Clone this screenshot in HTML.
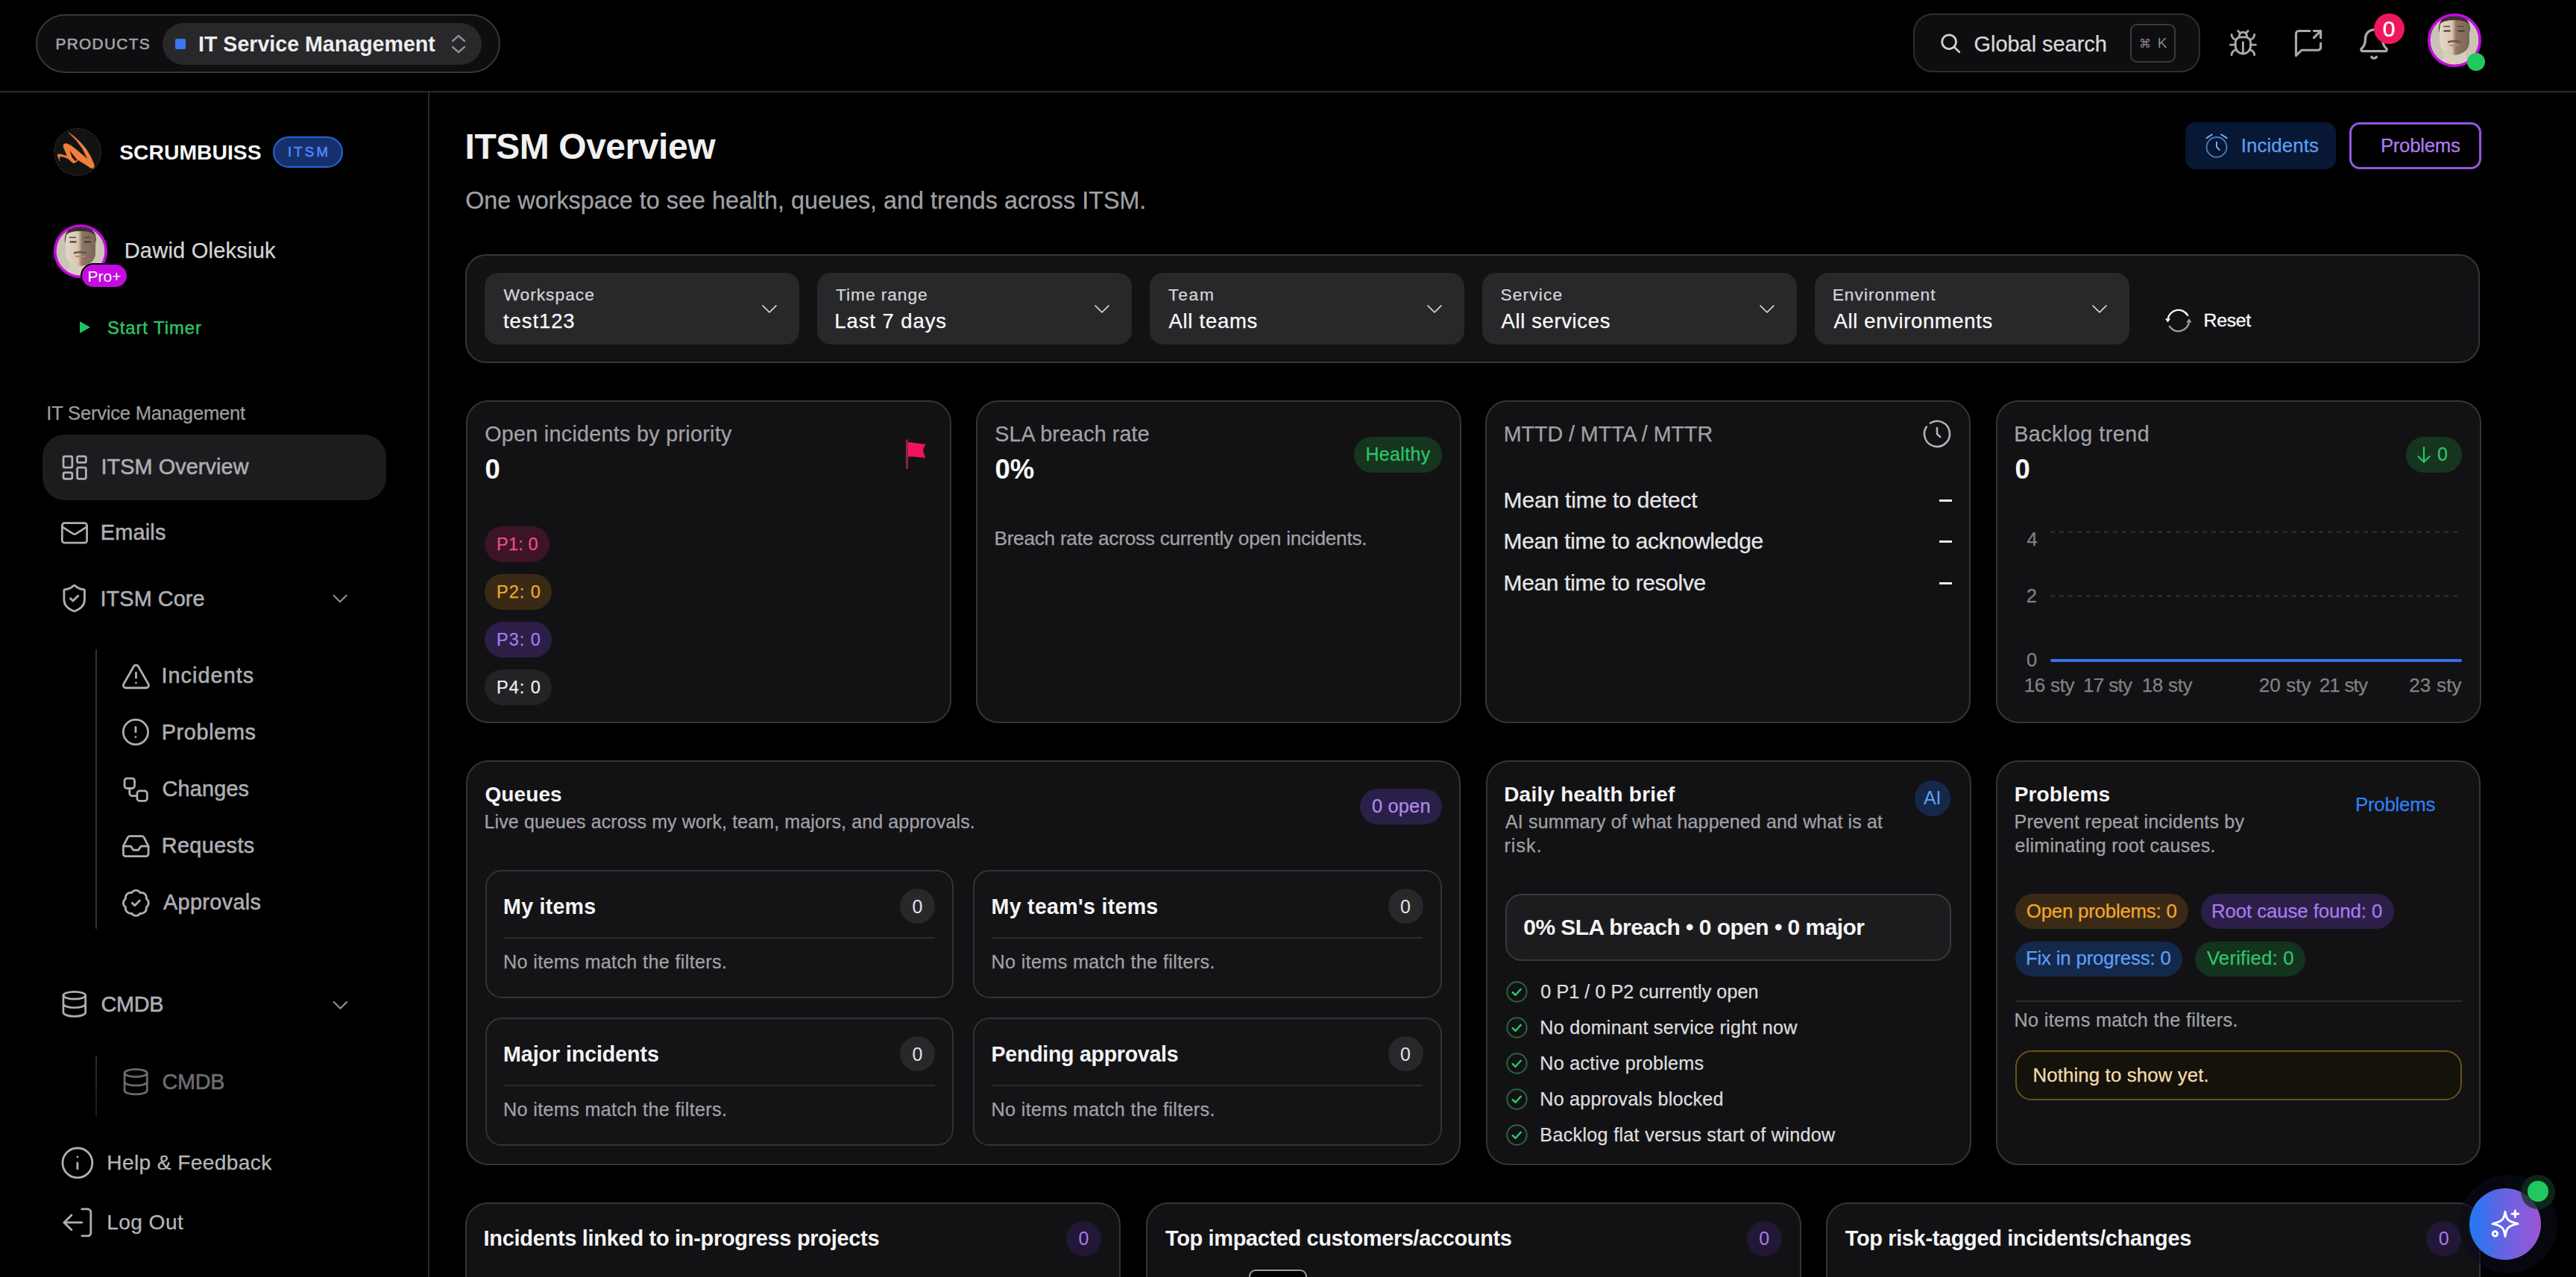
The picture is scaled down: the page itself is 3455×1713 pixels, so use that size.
<!DOCTYPE html>
<html><head><meta charset="utf-8"><title>ITSM Overview</title>
<style>
*{box-sizing:border-box;margin:0;padding:0}
html,body{width:3455px;height:1713px;overflow:hidden;background:#000;font-family:"Liberation Sans",sans-serif;color:#e4e4e7}
.a{position:absolute}
.t{line-height:1;white-space:nowrap;-webkit-text-stroke:0.25px currentColor}
.fx{display:flex;align-items:center}
svg{display:block}
.hline{left:0;top:122px;width:3455px;height:2px;background:#2a2a2a}
.vline{left:574px;top:124px;width:2px;height:1589px;background:#2a2a2a}
/* header */
.prod{left:48px;top:19px;width:623px;height:79px;border:2px solid #38383a;border-radius:40px;background:#0e0e10}
.prod .lbl{position:absolute;left:24.5px;top:25.8px;font-size:20.8px;font-weight:normal;-webkit-text-stroke:0.65px #a1a1a6;letter-spacing:1.35px;color:#a1a1a6}
.prod .pill{position:absolute;left:168px;top:10px;width:428px;height:56px;border-radius:28px;background:#28282b}
.prod .sq{position:absolute;left:17px;top:21px;width:14px;height:14px;background:#3b76f0;border-radius:2px}
.prod .nm{position:absolute;left:48px;top:12px;font-size:28.6px;font-weight:bold;color:#ededee;white-space:nowrap}
.search{left:2566px;top:18px;width:385px;height:79px;border:2px solid #2e2e30;border-radius:26px;background:#0e0e10}
.search .txt{position:absolute;left:81px;top:22px;font-size:28px;color:#d8d8da}
.kbd{position:absolute;left:289px;top:12px;width:61px;height:52px;border:2px solid #3a3a3c;border-radius:9px;font-size:19px;color:#8a8a8e}
/* sidebar */
.nav{left:57px;width:461px;height:88px;border-radius:30px}
.nav.act{background:#1c1c1e}
.navt{font-size:28px;font-weight:bold;color:#c9c9cc;white-space:nowrap}
.subt{font-size:28px;font-weight:bold;color:#c9c9cc;white-space:nowrap}
.ico{stroke:#bdbdc0;fill:none;stroke-width:1.7;stroke-linecap:round;stroke-linejoin:round}
</style></head><body>
<div class="a hline"></div>
<div class="a vline"></div>

<!-- PRODUCTS pill -->
<div class="a prod">
  <div class="lbl">PRODUCTS</div>
  <div class="pill">
    <div class="sq"></div>
    <div class="nm">IT Service Management</div>
    <svg class="a" style="left:386px;top:14px" width="22" height="28" viewBox="0 0 22 28"><path d="M3 10 L11 3 L19 10 M3 18 L11 25 L19 18" stroke="#8e8e92" stroke-width="2.4" fill="none" stroke-linecap="round" stroke-linejoin="round"/></svg>
  </div>
</div>

<!-- search -->
<div class="a search">
  <svg class="a" style="left:32.5px;top:22.5px" width="30" height="30" viewBox="0 0 24 24"><circle cx="10.5" cy="10.5" r="7.5" stroke="#d0d0d3" stroke-width="2.2" fill="none"/><path d="M16 16 L21.5 21.5" stroke="#d0d0d3" stroke-width="2.2" stroke-linecap="round"/></svg>
  <div class="kbd fx" style="justify-content:center;gap:9px"><span style="font-size:16px">&#8984;</span><span>K</span></div>
</div>

<div class="a t" style="left:2647.6px;top:45.4px;font-size:29.00px;color:#d8d8da;letter-spacing:-0.06px;">Global search</div>
<!-- header icons -->
<svg class="a" style="left:2987.5px;top:37.5px;" width="40.8" height="40.8" viewBox="0 0 24 24"><g stroke="#a9a9ac" stroke-width="1.7" fill="none" stroke-linecap="round" stroke-linejoin="round"><path d="m8 2 1.88 1.88"/><path d="M14.12 3.88 16 2"/><path d="M9 7.13v-1a3.003 3.003 0 1 1 6 0v1"/><path d="M12 20c-3.3 0-6-2.7-6-6v-3a4 4 0 0 1 4-4h4a4 4 0 0 1 4 4v3c0 3.3-2.7 6-6 6"/><path d="M12 20v-9"/><path d="M6.53 9C4.6 8.8 3 7.1 3 5"/><path d="M6 13H2"/><path d="M3 21c0-2.1 1.7-3.9 3.8-4"/><path d="M20.97 5c0 2.1-1.6 3.8-3.5 4"/><path d="M22 13h-4"/><path d="M17.2 17c2.1.1 3.8 1.9 3.8 4"/></g></svg>
<svg class="a" style="left:3074.2px;top:36.4px;" width="44.1" height="44.1" viewBox="0 0 24 24"><g stroke="#a9a9ac" stroke-width="1.7" fill="none" stroke-linecap="round" stroke-linejoin="round"><path d="M21 12v3a2 2 0 0 1-2 2H7l-4 4V5a2 2 0 0 1 2-2h8"/><path d="M16 3h5v5"/><path d="m16 8 5-5"/></g></svg>
<svg class="a" style="left:3161.1px;top:35.7px;" width="46.1" height="46.1" viewBox="0 0 24 24"><g stroke="#a9a9ac" stroke-width="1.7" fill="none" stroke-linecap="round" stroke-linejoin="round"><path d="M10.268 21a2 2 0 0 0 3.464 0"/><path d="M3.262 15.326A1 1 0 0 0 4 17h16a1 1 0 0 0 .74-1.673C19.41 13.956 18 12.499 18 8A6 6 0 0 0 6 8c0 4.499-1.411 5.956-2.738 7.326"/></g></svg>
<div class="a fx" style="left:3183.5px;top:17.5px;width:41px;height:41px;border-radius:50%;background:#f0185a;justify-content:center;font-size:30px;color:#fff;-webkit-text-stroke:0.4px #fff;padding-top:1px">0</div>
<!-- avatar top -->
<svg class="a" style="left:3256px;top:18px" width="72" height="72" viewBox="0 0 72 72"><defs><clipPath id="ca2"><circle cx="36" cy="36" r="33"/></clipPath><linearGradient id="ga2" x1="0" x2="1"><stop offset="0" stop-color="#e4d6c6"/><stop offset="0.42" stop-color="#d9c6b2"/><stop offset="0.55" stop-color="#8f7663"/><stop offset="1" stop-color="#7a6656"/></linearGradient></defs><g clip-path="url(#ca2)"><rect width="72" height="72" fill="#c9c4b6"/><path d="M22 50 L50 50 L54 72 L18 72 Z" fill="#d8cdbd"/><path d="M16 14 Q16 6 35 6 Q56 6 56 16 L56 40 Q54 54 36 56 Q18 54 16 40 Z" fill="url(#ga2)"/><path d="M15 26 Q13 2 36 2 Q58 2 57 26 L55 14 Q50 9 36 9 Q21 9 17 14 Z" fill="#3b302a"/><path d="M21 17.5 h9 M40 17.5 h9" stroke="#5a4637" stroke-width="1.6"/><path d="M21.5 23.5 h9 M40.5 23.5 h9" stroke="#3e3028" stroke-width="2.2"/><path d="M27 38.5 Q35.5 36 44 38.5" stroke="#6e5443" stroke-width="2.4" fill="none"/><path d="M29 42.5 Q35.5 44 42 42.5" stroke="#b98878" stroke-width="1.8" fill="none"/></g><circle cx="36" cy="36" r="34.2" fill="none" stroke="#c40ae0" stroke-width="3.6"/></svg>
<div class="a" style="left:3309px;top:71px;width:24px;height:24px;border-radius:50%;background:#1fc95f"></div>


<!-- SIDEBAR -->
<div class="a" style="left:72px;top:172px;width:64px;height:64px;border-radius:50%;background:#121212;border:1px dashed #3a3a3a"></div>
<svg class="a" style="left:72px;top:172px" width="64" height="64" viewBox="0 0 64 64"><path fill-rule="evenodd" fill="#ee7f3d" stroke="#ee7f3d" stroke-width="0.6" stroke-linejoin="round" d="M20.0 5.8 L27.3 10.9 L35.2 18.2 L43.1 27.3 L49.3 37.5 L53.3 46.5 L54.7 51.3 L53.0 53.8 L49.9 53.6 L42.0 48.2 L33.0 42.8 L29.6 45.7 L27.3 46.8 L25.1 45.9 L19.4 40.9 L14.4 38.7 L8.7 37.6 L7.3 40.9 L8.1 43.7 L5.2 36.5 L5.8 34.7 L10.4 35.2 L18.3 37.4 L15.2 30.2 L12.8 24.2 L13.7 21.3 L17.1 20.5 L22.8 22.9 L30.7 29.1 L45.9 41.7 L38.6 27.3 L30.7 16.6 Z M21.0 29.0 L31.8 42.4 L29.1 44.4 L24.2 38.9 Z"/></svg>
<div class="a t" style="left:160.2px;top:190.3px;font-size:28.30px;color:#fafafa;font-weight:bold;-webkit-text-stroke:0;letter-spacing:0.02px;">SCRUMBUISS</div>
<div class="a fx" style="left:366px;top:183px;width:94px;height:42px;border-radius:21px;background:#16306e;border:2px solid #2f62d8;justify-content:center;font-size:18.5px;font-weight:normal;-webkit-text-stroke:0.6px #4f86f7;letter-spacing:3.2px;color:#4f86f7;padding-left:3px">ITSM</div>

<svg class="a" style="left:72px;top:301px" width="72" height="72" viewBox="0 0 72 72"><defs><clipPath id="ca1"><circle cx="36" cy="36" r="33"/></clipPath><linearGradient id="ga1" x1="0" x2="1"><stop offset="0" stop-color="#e4d6c6"/><stop offset="0.42" stop-color="#d9c6b2"/><stop offset="0.55" stop-color="#8f7663"/><stop offset="1" stop-color="#7a6656"/></linearGradient></defs><g clip-path="url(#ca1)"><rect width="72" height="72" fill="#c9c4b6"/><path d="M22 50 L50 50 L54 72 L18 72 Z" fill="#d8cdbd"/><path d="M16 14 Q16 6 35 6 Q56 6 56 16 L56 40 Q54 54 36 56 Q18 54 16 40 Z" fill="url(#ga1)"/><path d="M15 26 Q13 2 36 2 Q58 2 57 26 L55 14 Q50 9 36 9 Q21 9 17 14 Z" fill="#3b302a"/><path d="M21 17.5 h9 M40 17.5 h9" stroke="#5a4637" stroke-width="1.6"/><path d="M21.5 23.5 h9 M40.5 23.5 h9" stroke="#3e3028" stroke-width="2.2"/><path d="M27 38.5 Q35.5 36 44 38.5" stroke="#6e5443" stroke-width="2.4" fill="none"/><path d="M29 42.5 Q35.5 44 42 42.5" stroke="#b98878" stroke-width="1.8" fill="none"/></g><circle cx="36" cy="36" r="34.2" fill="none" stroke="#c40ae0" stroke-width="3.6"/></svg>
<div class="a fx" style="left:108px;top:353px;width:64px;height:34px;border-radius:17px;background:#c40ae0;border:2px solid #000;justify-content:center;font-size:21px;color:#fff;padding-top:1px">Pro+</div>
<div class="a t" style="left:166.7px;top:322.2px;font-size:29.00px;color:#d6d6d8;letter-spacing:0.23px;">Dawid Oleksiuk</div>
<svg class="a" style="left:106px;top:430px" width="16" height="18" viewBox="0 0 16 18"><path d="M1 1 L15 9 L1 17 Z" fill="#22c35e"/></svg>
<div class="a t" style="left:143.9px;top:427.5px;font-size:23.80px;color:#2fc466;letter-spacing:0.96px;-webkit-text-stroke:0.5px #2fc466;">Start Timer</div>


<div class="a t" style="left:62.3px;top:541.7px;font-size:25.60px;color:#9d9da2;letter-spacing:-0.22px;">IT Service Management</div>
<div class="a" style="left:57px;top:583px;width:461px;height:88px;border-radius:30px;background:#1c1c1f"></div>
<svg class="a" style="left:79.9px;top:606.6px;" width="40.4" height="40.4" viewBox="0 0 24 24"><g stroke="#aeaeb3" stroke-width="1.65" fill="none" stroke-linecap="round" stroke-linejoin="round"><rect x="3" y="3" width="7" height="9" rx="1.2"/><rect x="14" y="3" width="7" height="5" rx="1.2"/><rect x="14" y="12" width="7" height="9" rx="1.2"/><rect x="3" y="16" width="7" height="5" rx="1.2"/></g></svg>
<div class="a t" style="left:135.4px;top:612.1px;font-size:28.80px;color:#aeaeb3;letter-spacing:0.11px;-webkit-text-stroke:0.55px #aeaeb3;">ITSM Overview</div>
<svg class="a" style="left:79.8px;top:695.0px;" width="39.9" height="39.9" viewBox="0 0 24 24"><g stroke="#aeaeb3" stroke-width="1.65" fill="none" stroke-linecap="round" stroke-linejoin="round"><rect x="2" y="4" width="20" height="16" rx="2"/><path d="m22 7-8.97 5.7a1.94 1.94 0 0 1-2.06 0L2 7"/></g></svg>
<div class="a t" style="left:134.8px;top:700.4px;font-size:28.80px;color:#aeaeb3;letter-spacing:0.22px;-webkit-text-stroke:0.55px #aeaeb3;">Emails</div>
<svg class="a" style="left:79.4px;top:781.8px;" width="41.3" height="41.3" viewBox="0 0 24 24"><g stroke="#aeaeb3" stroke-width="1.65" fill="none" stroke-linecap="round" stroke-linejoin="round"><path d="M20 13c0 5-3.5 7.5-7.66 8.95a1 1 0 0 1-.67-.01C7.5 20.5 4 18 4 13V6a1 1 0 0 1 1-1c2 0 4.5-1.2 6.24-2.72a1.17 1.17 0 0 1 1.52 0C14.51 3.81 17 5 19 5a1 1 0 0 1 1 1z"/><path d="m9 12 2 2 4-4"/></g></svg>
<div class="a t" style="left:134.5px;top:789.2px;font-size:28.80px;color:#aeaeb3;letter-spacing:0.11px;-webkit-text-stroke:0.55px #aeaeb3;">ITSM Core</div>
<svg class="a" style="left:438.8px;top:786.1px;" width="34.2" height="34.2" viewBox="0 0 24 24"><g stroke="#8e8e93" stroke-width="1.5" fill="none" stroke-linecap="round" stroke-linejoin="round"><path d="m6 9 6 6 6-6"/></g></svg>
<div class="a" style="left:128px;top:871px;width:2px;height:375px;background:#333336"></div>
<svg class="a" style="left:161.7px;top:886.8px;" width="40.9" height="40.9" viewBox="0 0 24 24"><g stroke="#aeaeb3" stroke-width="1.65" fill="none" stroke-linecap="round" stroke-linejoin="round"><path d="m21.73 18-8-14a2 2 0 0 0-3.48 0l-8 14A2 2 0 0 0 4 21h16a2 2 0 0 0 1.73-3"/><path d="M12 9v4"/><path d="M12 17h.01"/></g></svg>
<div class="a t" style="left:216.4px;top:892.2px;font-size:28.80px;color:#aeaeb3;letter-spacing:1.07px;-webkit-text-stroke:0.55px #aeaeb3;">Incidents</div>
<svg class="a" style="left:162.0px;top:962.0px;" width="39.9" height="39.9" viewBox="0 0 24 24"><g stroke="#aeaeb3" stroke-width="1.65" fill="none" stroke-linecap="round" stroke-linejoin="round"><circle cx="12" cy="12" r="10"/><line x1="12" x2="12" y1="8" y2="12"/><line x1="12" x2="12.01" y1="16" y2="16"/></g></svg>
<div class="a t" style="left:216.7px;top:967.9px;font-size:28.80px;color:#aeaeb3;letter-spacing:0.67px;-webkit-text-stroke:0.55px #aeaeb3;">Problems</div>
<svg class="a" style="left:161.6px;top:1038.5px;" width="40.4" height="40.4" viewBox="0 0 24 24"><g stroke="#aeaeb3" stroke-width="1.65" fill="none" stroke-linecap="round" stroke-linejoin="round"><rect width="8" height="8" x="3" y="3" rx="2"/><path d="M7 11v4a2 2 0 0 0 2 2h4"/><rect width="8" height="8" x="13" y="13" rx="2"/></g></svg>
<div class="a t" style="left:217.6px;top:1043.7px;font-size:28.80px;color:#aeaeb3;letter-spacing:0.19px;-webkit-text-stroke:0.55px #aeaeb3;">Changes</div>
<svg class="a" style="left:161.6px;top:1114.6px;" width="40.4" height="40.4" viewBox="0 0 24 24"><g stroke="#aeaeb3" stroke-width="1.65" fill="none" stroke-linecap="round" stroke-linejoin="round"><polyline points="22 12 16 12 14 15 10 15 8 12 2 12"/><path d="M5.45 5.11 2 12v6a2 2 0 0 0 2 2h16a2 2 0 0 0 2-2v-6l-3.45-6.89A2 2 0 0 0 16.76 4H7.24a2 2 0 0 0-1.79 1.11z"/></g></svg>
<div class="a t" style="left:216.7px;top:1120.4px;font-size:28.80px;color:#aeaeb3;letter-spacing:0.41px;-webkit-text-stroke:0.55px #aeaeb3;">Requests</div>
<svg class="a" style="left:161.6px;top:1190.6px;" width="40.7" height="40.7" viewBox="0 0 24 24"><g stroke="#aeaeb3" stroke-width="1.65" fill="none" stroke-linecap="round" stroke-linejoin="round"><path d="M3.85 8.62a4 4 0 0 1 4.78-4.77 4 4 0 0 1 6.74 0 4 4 0 0 1 4.78 4.78 4 4 0 0 1 0 6.74 4 4 0 0 1-4.77 4.78 4 4 0 0 1-6.75 0 4 4 0 0 1-4.78-4.77 4 4 0 0 1 0-6.76Z"/><path d="m9 12 2 2 4-4"/></g></svg>
<div class="a t" style="left:219.0px;top:1196.4px;font-size:28.80px;color:#aeaeb3;letter-spacing:0.37px;-webkit-text-stroke:0.55px #aeaeb3;">Approvals</div>
<svg class="a" style="left:80.0px;top:1327.3px;" width="39.6" height="39.6" viewBox="0 0 24 24"><g stroke="#aeaeb3" stroke-width="1.65" fill="none" stroke-linecap="round" stroke-linejoin="round"><ellipse cx="12" cy="5" rx="9" ry="3"/><path d="M3 5V19A9 3 0 0 0 21 19V5"/><path d="M3 12A9 3 0 0 0 21 12"/></g></svg>
<div class="a t" style="left:135.4px;top:1332.9px;font-size:28.80px;color:#aeaeb3;letter-spacing:-0.22px;-webkit-text-stroke:0.55px #aeaeb3;">CMDB</div>
<svg class="a" style="left:438.8px;top:1330.5px;" width="34.9" height="34.9" viewBox="0 0 24 24"><g stroke="#8e8e93" stroke-width="1.5" fill="none" stroke-linecap="round" stroke-linejoin="round"><path d="m6 9 6 6 6-6"/></g></svg>
<div class="a" style="left:128px;top:1416px;width:2px;height:82px;background:linear-gradient(#2e2e31,#1a1a1c)"></div>
<svg class="a" style="left:161.7px;top:1430.9px;" width="40.3" height="40.3" viewBox="0 0 24 24"><g stroke="#6a6a6e" stroke-width="1.65" fill="none" stroke-linecap="round" stroke-linejoin="round"><ellipse cx="12" cy="5" rx="9" ry="3"/><path d="M3 5V19A9 3 0 0 0 21 19V5"/><path d="M3 12A9 3 0 0 0 21 12"/></g></svg>
<div class="a t" style="left:217.4px;top:1436.7px;font-size:28.80px;color:#6e6e72;letter-spacing:-0.22px;-webkit-text-stroke:0.55px #6e6e72;">CMDB</div>
<svg class="a" style="left:80.0px;top:1536.4px;" width="47.8" height="47.8" viewBox="0 0 24 24"><g stroke="#b0b0b4" stroke-width="1.4" fill="none" stroke-linecap="round" stroke-linejoin="round"><circle cx="12" cy="12" r="10"/><path d="M12 16v-4"/><path d="M12 8h.01"/></g></svg>
<div class="a t" style="left:143.3px;top:1545.5px;font-size:28.10px;color:#b6b6ba;letter-spacing:0.39px;">Help &amp; Feedback</div>
<svg class="a" style="left:80.0px;top:1616.1px;" width="47.8" height="47.8" viewBox="0 0 24 24"><g stroke="#b0b0b4" stroke-width="1.4" fill="none" stroke-linecap="round" stroke-linejoin="round"><path d="M15 3h4a2 2 0 0 1 2 2v14a2 2 0 0 1-2 2h-4"/><polyline points="8 7 3 12 8 17"/><line x1="3" x2="15" y1="12" y2="12"/></g></svg>
<div class="a t" style="left:143.3px;top:1625.8px;font-size:28.10px;color:#b6b6ba;letter-spacing:0.41px;">Log Out</div>
<!-- MAIN -->
<div class="a t" style="left:623.5px;top:172.5px;font-size:48.00px;color:#f0f0f1;font-weight:bold;-webkit-text-stroke:0;letter-spacing:-0.45px;">ITSM Overview</div>
<div class="a t" style="left:624.2px;top:252.8px;font-size:32.30px;color:#a1a1a6;letter-spacing:0.02px;">One workspace to see health, queues, and trends across ITSM.</div>
<div class="a" style="left:2931.0px;top:164.0px;width:202.0px;height:63.0px;border-radius:14px;background:#071734"></div>
<svg class="a" style="left:2945px;top:165px" width="60" height="60" viewBox="0 0 60 60"><g fill="none" stroke-linecap="round"><circle cx="28" cy="32.4" r="13.4" stroke="#4a7bb9" stroke-width="1.9"/><path d="M28 25.8 V32.2 L31.7 36" stroke="#72b4f7" stroke-width="1.9" stroke-linejoin="round"/><path d="M14.6 20.2 L21.9 15.5 M34.3 15.5 L41.6 20.2" stroke="#72b4f7" stroke-width="2"/></g></svg>
<div class="a t" style="left:3005.7px;top:183.1px;font-size:25.80px;color:#5d9ef5;letter-spacing:0.12px;">Incidents</div>
<div class="a" style="left:3151.0px;top:164.0px;width:177.0px;height:63.0px;border-radius:14px;border:3px solid #9556e0"></div>
<div class="a t" style="left:3192.9px;top:183.1px;font-size:25.80px;color:#b07cf0;letter-spacing:-0.29px;">Problems</div>
<div class="a" style="left:624.0px;top:341.0px;width:2702.0px;height:146.0px;border-radius:28px;border:2px solid #36363a;background:#121214"></div>
<div class="a" style="left:650.0px;top:366.0px;width:422.0px;height:96.0px;border-radius:18px;background:#28282b"></div>
<div class="a t" style="left:675.4px;top:384.4px;font-size:22.80px;color:#d4d4d8;letter-spacing:0.99px;">Workspace</div>
<div class="a t" style="left:675.1px;top:416.6px;font-size:27.50px;color:#fafafa;letter-spacing:0.89px;">test123</div>
<svg class="a" style="left:1020px;top:402px" width="24" height="24" viewBox="0 0 24 24"><path d="M3 8 L12 17 L21 8" stroke="#e4e4e7" stroke-width="1.6" fill="none" stroke-linecap="round" stroke-linejoin="round"/></svg>
<div class="a" style="left:1096.0px;top:366.0px;width:422.0px;height:96.0px;border-radius:18px;background:#28282b"></div>
<div class="a t" style="left:1121.0px;top:384.4px;font-size:22.80px;color:#d4d4d8;letter-spacing:0.92px;">Time range</div>
<div class="a t" style="left:1119.3px;top:416.6px;font-size:27.50px;color:#fafafa;letter-spacing:0.91px;">Last 7 days</div>
<svg class="a" style="left:1466px;top:402px" width="24" height="24" viewBox="0 0 24 24"><path d="M3 8 L12 17 L21 8" stroke="#e4e4e7" stroke-width="1.6" fill="none" stroke-linecap="round" stroke-linejoin="round"/></svg>
<div class="a" style="left:1542.0px;top:366.0px;width:422.0px;height:96.0px;border-radius:18px;background:#28282b"></div>
<div class="a t" style="left:1567.0px;top:384.4px;font-size:22.80px;color:#d4d4d8;letter-spacing:1.76px;">Team</div>
<div class="a t" style="left:1567.5px;top:416.6px;font-size:27.50px;color:#fafafa;letter-spacing:0.71px;">All teams</div>
<svg class="a" style="left:1912px;top:402px" width="24" height="24" viewBox="0 0 24 24"><path d="M3 8 L12 17 L21 8" stroke="#e4e4e7" stroke-width="1.6" fill="none" stroke-linecap="round" stroke-linejoin="round"/></svg>
<div class="a" style="left:1988.0px;top:366.0px;width:422.0px;height:96.0px;border-radius:18px;background:#28282b"></div>
<div class="a t" style="left:2012.5px;top:384.4px;font-size:22.80px;color:#d4d4d8;letter-spacing:1.09px;">Service</div>
<div class="a t" style="left:2013.5px;top:416.6px;font-size:27.50px;color:#fafafa;letter-spacing:0.62px;">All services</div>
<svg class="a" style="left:2358px;top:402px" width="24" height="24" viewBox="0 0 24 24"><path d="M3 8 L12 17 L21 8" stroke="#e4e4e7" stroke-width="1.6" fill="none" stroke-linecap="round" stroke-linejoin="round"/></svg>
<div class="a" style="left:2434.0px;top:366.0px;width:422.0px;height:96.0px;border-radius:18px;background:#28282b"></div>
<div class="a t" style="left:2457.7px;top:384.4px;font-size:22.80px;color:#d4d4d8;letter-spacing:0.98px;">Environment</div>
<div class="a t" style="left:2459.5px;top:416.6px;font-size:27.50px;color:#fafafa;letter-spacing:0.63px;">All environments</div>
<svg class="a" style="left:2804px;top:402px" width="24" height="24" viewBox="0 0 24 24"><path d="M3 8 L12 17 L21 8" stroke="#e4e4e7" stroke-width="1.6" fill="none" stroke-linecap="round" stroke-linejoin="round"/></svg>
<svg class="a" style="left:2900px;top:408px" width="44" height="44" viewBox="0 0 44 44"><g fill="none" stroke-width="2.4" stroke-linecap="round"><path d="M34.2 15.0 A14.3 14.3 0 0 0 7.6 20.6" stroke="#f6f6f7"/><path d="M9.7 29.7 A14.3 14.3 0 0 0 36.0 23.2" stroke="#9c9ca0"/></g><path d="M3.9 19.6 L11.1 19.6 L7.5 24.6 Z" fill="#f6f6f7"/><path d="M32.4 24.4 L39.6 24.4 L36 19.2 Z" fill="#9c9ca0"/></svg>
<div class="a t" style="left:2955.5px;top:417.8px;font-size:24.80px;color:#f4f4f5;letter-spacing:-0.28px;-webkit-text-stroke:0.45px #f4f4f5;">Reset</div>
<div class="a" style="left:624.6px;top:537.0px;width:651.0px;height:433.0px;border-radius:30px;border:2px solid #353538;background:#121214"></div>
<div class="a" style="left:1308.7px;top:537.0px;width:651.0px;height:433.0px;border-radius:30px;border:2px solid #353538;background:#121214"></div>
<div class="a" style="left:1992.3px;top:537.0px;width:651.0px;height:433.0px;border-radius:30px;border:2px solid #353538;background:#121214"></div>
<div class="a" style="left:2676.5px;top:537.0px;width:651.0px;height:433.0px;border-radius:30px;border:2px solid #353538;background:#121214"></div>
<div class="a t" style="left:650.2px;top:567.6px;font-size:28.70px;color:#a1a1a6;letter-spacing:0.30px;">Open incidents by priority</div>
<div class="a t" style="left:650.5px;top:612.0px;font-size:36.50px;color:#fafafa;font-weight:bold;-webkit-text-stroke:0;">0</div>
<svg class="a" style="left:1212px;top:586px" width="34" height="46" viewBox="0 0 34 46"><rect x="2.9" y="3.3" width="3.1" height="39.7" rx="1.5" fill="#8a2249"/><path d="M5.9 7.3 C10 6.6 15 8.2 20 8.8 L29.3 9.9 L25.8 17.8 L29.3 28.2 C24 28 19 27.2 14 26.6 C11 26.3 8 26.6 5.9 26.7 Z" fill="#f0145a"/></svg>
<div class="a" style="left:650.0px;top:706.0px;width:86.8px;height:47.5px;border-radius:24px;background:#3c1426"></div>
<div class="a t" style="left:666.1px;top:719.1px;font-size:23.50px;color:#ec4d89;letter-spacing:0.16px;">P1: 0</div>
<div class="a" style="left:650.0px;top:770.0px;width:90.4px;height:47.5px;border-radius:24px;background:#3a2a15"></div>
<div class="a t" style="left:666.1px;top:783.2px;font-size:23.50px;color:#f2a62c;letter-spacing:0.96px;">P2: 0</div>
<div class="a" style="left:650.0px;top:834.1px;width:90.4px;height:47.5px;border-radius:24px;background:#2b1f48"></div>
<div class="a t" style="left:666.1px;top:847.2px;font-size:23.50px;color:#a77cec;letter-spacing:0.96px;">P3: 0</div>
<div class="a" style="left:650.0px;top:898.1px;width:90.4px;height:47.5px;border-radius:24px;background:#232326"></div>
<div class="a t" style="left:666.1px;top:911.3px;font-size:23.50px;color:#ededee;letter-spacing:0.96px;">P4: 0</div>
<div class="a t" style="left:1334.2px;top:567.6px;font-size:28.70px;color:#a1a1a6;letter-spacing:0.12px;">SLA breach rate</div>
<div class="a t" style="left:1334.5px;top:612.0px;font-size:36.50px;color:#fafafa;font-weight:bold;-webkit-text-stroke:0;">0%</div>
<div class="a" style="left:1816.0px;top:586.0px;width:118.0px;height:48.0px;border-radius:24px;background:#15351f"></div>
<div class="a t" style="left:1831.5px;top:597.0px;font-size:25.00px;color:#2ec46a;letter-spacing:0.31px;">Healthy</div>
<div class="a t" style="left:1333.4px;top:708.8px;font-size:26.30px;color:#a1a1a6;letter-spacing:-0.30px;">Breach rate across currently open incidents.</div>
<div class="a t" style="left:2016.7px;top:567.6px;font-size:28.70px;color:#a1a1a6;letter-spacing:-0.06px;">MTTD / MTTA / MTTR</div>
<svg class="a" style="left:2576px;top:560px" width="44" height="44" viewBox="0 0 24 24"><g stroke="#b4b4b8" stroke-width="1.4" fill="none" stroke-linecap="round" stroke-linejoin="round"><path d="M7.07 4.11 A9.3 9.3 0 1 1 4.29 6.80"/><path d="M12 7.6v4.4l2.3 2.3"/></g></svg>
<div class="a t" style="left:2016.6px;top:656.3px;font-size:30.00px;color:#e6e6e8;letter-spacing:-0.19px;">Mean time to detect</div>
<div class="a" style="left:2601.0px;top:670.1px;width:16.5px;height:3.3px;background:#f0f0f1"></div>
<div class="a t" style="left:2016.6px;top:710.9px;font-size:30.00px;color:#e6e6e8;letter-spacing:-0.36px;">Mean time to acknowledge</div>
<div class="a" style="left:2601.0px;top:724.7px;width:16.5px;height:3.3px;background:#f0f0f1"></div>
<div class="a t" style="left:2016.6px;top:767.1px;font-size:30.00px;color:#e6e6e8;letter-spacing:-0.36px;">Mean time to resolve</div>
<div class="a" style="left:2601.0px;top:780.9px;width:16.5px;height:3.3px;background:#f0f0f1"></div>
<div class="a t" style="left:2701.2px;top:567.6px;font-size:28.70px;color:#a1a1a6;letter-spacing:0.50px;">Backlog trend</div>
<div class="a t" style="left:2702.5px;top:612.0px;font-size:36.50px;color:#fafafa;font-weight:bold;-webkit-text-stroke:0;">0</div>
<div class="a" style="left:3227.0px;top:586.0px;width:75.0px;height:48.0px;border-radius:24px;background:#15351f"></div>
<svg class="a" style="left:3238px;top:597px" width="26" height="26" viewBox="0 0 24 24"><g stroke="#2ec46a" stroke-width="2" fill="none" stroke-linecap="round" stroke-linejoin="round"><path d="M12 3v18"/><path d="m5 14 7 7 7-7"/></g></svg>
<div class="a t" style="left:3269.0px;top:597.0px;font-size:25.00px;color:#2ec46a;">0</div>
<div class="a t" style="left:2718.5px;top:710.6px;font-size:25.50px;color:#818186;">4</div>
<div class="a t" style="left:2717.7px;top:786.6px;font-size:25.50px;color:#818186;">2</div>
<div class="a t" style="left:2718.0px;top:873.0px;font-size:25.50px;color:#818186;">0</div>
<svg class="a" style="left:2750px;top:712.0px" width="548" height="3"><line x1="0" y1="1.5" x2="548" y2="1.5" stroke="#3c3c40" stroke-width="1.6" stroke-dasharray="6 6"/></svg>
<svg class="a" style="left:2750px;top:797.6px" width="548" height="3"><line x1="0" y1="1.5" x2="548" y2="1.5" stroke="#3c3c40" stroke-width="1.6" stroke-dasharray="6 6"/></svg>
<div class="a" style="left:2750.0px;top:884.0px;width:552.0px;height:4.0px;background:#3b6ff0;border-radius:2px"></div>
<div class="a t" style="left:2714.7px;top:905.8px;font-size:26.00px;color:#818186;letter-spacing:-0.30px;">16 sty</div>
<div class="a t" style="left:2794.1px;top:905.8px;font-size:26.00px;color:#818186;letter-spacing:-0.68px;">17 sty</div>
<div class="a t" style="left:2872.7px;top:905.8px;font-size:26.00px;color:#818186;letter-spacing:-0.30px;">18 sty</div>
<div class="a t" style="left:3029.7px;top:905.8px;font-size:26.00px;color:#818186;letter-spacing:0.11px;">20 sty</div>
<div class="a t" style="left:3110.7px;top:905.8px;font-size:26.00px;color:#818186;letter-spacing:-0.81px;">21 sty</div>
<div class="a t" style="left:3231.2px;top:905.8px;font-size:26.00px;color:#818186;letter-spacing:0.21px;">23 sty</div>
<div class="a" style="left:624.6px;top:1020.0px;width:1334.7px;height:542.5px;border-radius:30px;border:2px solid #353538;background:#121214"></div>
<div class="a" style="left:1993.0px;top:1020.0px;width:650.7px;height:542.5px;border-radius:30px;border:2px solid #353538;background:#121214"></div>
<div class="a" style="left:2676.5px;top:1020.0px;width:650.7px;height:542.5px;border-radius:30px;border:2px solid #353538;background:#121214"></div>
<div class="a t" style="left:650.4px;top:1051.5px;font-size:28.00px;color:#f4f4f5;font-weight:bold;-webkit-text-stroke:0;letter-spacing:0.11px;">Queues</div>
<div class="a t" style="left:649.5px;top:1090.0px;font-size:25.00px;color:#a1a1a6;letter-spacing:0.12px;">Live queues across my work, team, majors, and approvals.</div>
<div class="a" style="left:1824.0px;top:1058.0px;width:110.0px;height:47.5px;border-radius:24px;background:#2a1f46"></div>
<div class="a t" style="left:1840.0px;top:1069.4px;font-size:25.50px;color:#b088f0;letter-spacing:0.12px;">0 open</div>
<div class="a" style="left:650.5px;top:1166.5px;width:628.5px;height:172.5px;border-radius:22px;border:2px solid #333337;background:#141417"></div>
<div class="a t" style="left:675.1px;top:1201.9px;font-size:28.60px;color:#f4f4f5;font-weight:bold;-webkit-text-stroke:0;letter-spacing:0.24px;">My items</div>
<div class="a fx" style="left:1207.0px;top:1191.8px;width:47px;height:47px;border-radius:50%;background:#28282b;justify-content:center;font-size:25px;color:#e4e4e6;padding-top:2px">0</div>
<div class="a" style="left:676.5px;top:1256.5px;width:577.0px;height:2.0px;background:#2c2c30"></div>
<div class="a t" style="left:675.0px;top:1277.7px;font-size:25.20px;color:#a1a1a6;letter-spacing:0.34px;">No items match the filters.</div>
<div class="a" style="left:1305.0px;top:1166.5px;width:628.5px;height:172.5px;border-radius:22px;border:2px solid #333337;background:#141417"></div>
<div class="a t" style="left:1329.6px;top:1201.9px;font-size:28.60px;color:#f4f4f5;font-weight:bold;-webkit-text-stroke:0;letter-spacing:0.28px;">My team&#x27;s items</div>
<div class="a fx" style="left:1861.5px;top:1191.8px;width:47px;height:47px;border-radius:50%;background:#28282b;justify-content:center;font-size:25px;color:#e4e4e6;padding-top:2px">0</div>
<div class="a" style="left:1331.0px;top:1256.5px;width:577.0px;height:2.0px;background:#2c2c30"></div>
<div class="a t" style="left:1329.5px;top:1277.7px;font-size:25.20px;color:#a1a1a6;letter-spacing:0.34px;">No items match the filters.</div>
<div class="a" style="left:650.5px;top:1364.8px;width:628.5px;height:172.5px;border-radius:22px;border:2px solid #333337;background:#141417"></div>
<div class="a t" style="left:675.1px;top:1400.2px;font-size:28.60px;color:#f4f4f5;font-weight:bold;-webkit-text-stroke:0;letter-spacing:-0.07px;">Major incidents</div>
<div class="a fx" style="left:1207.0px;top:1390.1px;width:47px;height:47px;border-radius:50%;background:#28282b;justify-content:center;font-size:25px;color:#e4e4e6;padding-top:2px">0</div>
<div class="a" style="left:676.5px;top:1454.8px;width:577.0px;height:2.0px;background:#2c2c30"></div>
<div class="a t" style="left:675.0px;top:1476.0px;font-size:25.20px;color:#a1a1a6;letter-spacing:0.34px;">No items match the filters.</div>
<div class="a" style="left:1305.0px;top:1364.8px;width:628.5px;height:172.5px;border-radius:22px;border:2px solid #333337;background:#141417"></div>
<div class="a t" style="left:1329.6px;top:1400.2px;font-size:28.60px;color:#f4f4f5;font-weight:bold;-webkit-text-stroke:0;letter-spacing:-0.30px;">Pending approvals</div>
<div class="a fx" style="left:1861.5px;top:1390.1px;width:47px;height:47px;border-radius:50%;background:#28282b;justify-content:center;font-size:25px;color:#e4e4e6;padding-top:2px">0</div>
<div class="a" style="left:1331.0px;top:1454.8px;width:577.0px;height:2.0px;background:#2c2c30"></div>
<div class="a t" style="left:1329.5px;top:1476.0px;font-size:25.20px;color:#a1a1a6;letter-spacing:0.34px;">No items match the filters.</div>
<div class="a t" style="left:2017.2px;top:1051.5px;font-size:28.00px;color:#f4f4f5;font-weight:bold;-webkit-text-stroke:0;letter-spacing:0.21px;">Daily health brief</div>
<div class="a t" style="left:2019.0px;top:1090.0px;font-size:25.00px;color:#a1a1a6;letter-spacing:0.14px;">AI summary of what happened and what is at</div>
<div class="a t" style="left:2017.4px;top:1122.0px;font-size:25.00px;color:#a1a1a6;letter-spacing:1.09px;">risk.</div>
<div class="a fx" style="left:2567.7px;top:1046.6px;width:48px;height:48px;border-radius:50%;background:#16284a;justify-content:center;font-size:25px;color:#5d9ef5">AI</div>
<div class="a" style="left:2018.6px;top:1199.0px;width:598.9px;height:90.0px;border-radius:22px;border:2px solid #3a3a3e;background:#1c1c1f"></div>
<div class="a t" style="left:2043.3px;top:1228.7px;font-size:30.00px;color:#f4f4f5;font-weight:bold;-webkit-text-stroke:0;letter-spacing:-0.56px;">0% SLA breach • 0 open • 0 major</div>
<svg class="a" style="left:2019.5px;top:1315.5px" width="29" height="29" viewBox="0 0 29 29"><circle cx="14.5" cy="14.5" r="13.2" stroke="#2a6342" stroke-width="2" fill="none"/><path d="M8.8 15.2 L12.6 18.8 L19.8 10.8" stroke="#2fcb6b" stroke-width="2.4" fill="none" stroke-linecap="round" stroke-linejoin="round"/></svg>
<div class="a t" style="left:2066.3px;top:1317.5px;font-size:25.20px;color:#dcdcde;letter-spacing:0.04px;">0 P1 / 0 P2 currently open</div>
<svg class="a" style="left:2019.5px;top:1363.5px" width="29" height="29" viewBox="0 0 29 29"><circle cx="14.5" cy="14.5" r="13.2" stroke="#2a6342" stroke-width="2" fill="none"/><path d="M8.8 15.2 L12.6 18.8 L19.8 10.8" stroke="#2fcb6b" stroke-width="2.4" fill="none" stroke-linecap="round" stroke-linejoin="round"/></svg>
<div class="a t" style="left:2065.3px;top:1365.5px;font-size:25.20px;color:#dcdcde;letter-spacing:0.23px;">No dominant service right now</div>
<svg class="a" style="left:2019.5px;top:1411.5px" width="29" height="29" viewBox="0 0 29 29"><circle cx="14.5" cy="14.5" r="13.2" stroke="#2a6342" stroke-width="2" fill="none"/><path d="M8.8 15.2 L12.6 18.8 L19.8 10.8" stroke="#2fcb6b" stroke-width="2.4" fill="none" stroke-linecap="round" stroke-linejoin="round"/></svg>
<div class="a t" style="left:2065.3px;top:1413.5px;font-size:25.20px;color:#dcdcde;letter-spacing:0.25px;">No active problems</div>
<svg class="a" style="left:2019.5px;top:1459.5px" width="29" height="29" viewBox="0 0 29 29"><circle cx="14.5" cy="14.5" r="13.2" stroke="#2a6342" stroke-width="2" fill="none"/><path d="M8.8 15.2 L12.6 18.8 L19.8 10.8" stroke="#2fcb6b" stroke-width="2.4" fill="none" stroke-linecap="round" stroke-linejoin="round"/></svg>
<div class="a t" style="left:2065.3px;top:1461.5px;font-size:25.20px;color:#dcdcde;letter-spacing:0.21px;">No approvals blocked</div>
<svg class="a" style="left:2019.5px;top:1507.5px" width="29" height="29" viewBox="0 0 29 29"><circle cx="14.5" cy="14.5" r="13.2" stroke="#2a6342" stroke-width="2" fill="none"/><path d="M8.8 15.2 L12.6 18.8 L19.8 10.8" stroke="#2fcb6b" stroke-width="2.4" fill="none" stroke-linecap="round" stroke-linejoin="round"/></svg>
<div class="a t" style="left:2065.3px;top:1509.5px;font-size:25.20px;color:#dcdcde;letter-spacing:0.28px;">Backlog flat versus start of window</div>
<div class="a t" style="left:2701.7px;top:1051.5px;font-size:28.00px;color:#f4f4f5;font-weight:bold;-webkit-text-stroke:0;letter-spacing:0.12px;">Problems</div>
<div class="a t" style="left:3158.9px;top:1066.9px;font-size:25.80px;color:#2f80f7;letter-spacing:-0.21px;">Problems</div>
<div class="a t" style="left:2701.5px;top:1090.0px;font-size:25.00px;color:#a1a1a6;letter-spacing:0.21px;">Prevent repeat incidents by</div>
<div class="a t" style="left:2702.5px;top:1122.0px;font-size:25.00px;color:#a1a1a6;letter-spacing:0.27px;">eliminating root causes.</div>
<div class="a" style="left:2703.0px;top:1199.0px;width:232.0px;height:47.0px;border-radius:24px;background:#3a2a15"></div>
<div class="a t" style="left:2717.8px;top:1209.9px;font-size:25.80px;color:#f2a62c;letter-spacing:-0.20px;">Open problems: 0</div>
<div class="a" style="left:2952.0px;top:1199.0px;width:258.5px;height:47.0px;border-radius:24px;background:#2b1f48"></div>
<div class="a t" style="left:2965.9px;top:1209.9px;font-size:25.80px;color:#a77cec;letter-spacing:-0.08px;">Root cause found: 0</div>
<div class="a" style="left:2703.0px;top:1262.5px;width:224.0px;height:47.0px;border-radius:24px;background:#13284a"></div>
<div class="a t" style="left:2716.9px;top:1273.4px;font-size:25.80px;color:#5d9ef5;letter-spacing:-0.17px;">Fix in progress: 0</div>
<div class="a" style="left:2944.0px;top:1262.5px;width:147.6px;height:47.0px;border-radius:24px;background:#14331f"></div>
<div class="a t" style="left:2959.9px;top:1273.4px;font-size:25.80px;color:#2ec46a;letter-spacing:0.19px;">Verified: 0</div>
<div class="a" style="left:2703.0px;top:1342.0px;width:599.0px;height:2.0px;background:#2c2c30"></div>
<div class="a t" style="left:2701.5px;top:1355.5px;font-size:25.20px;color:#a1a1a6;letter-spacing:0.34px;">No items match the filters.</div>
<div class="a" style="left:2703.0px;top:1409.0px;width:599.0px;height:67.0px;border-radius:22px;border:2px solid #6a5119;background:#15120c"></div>
<div class="a t" style="left:2726.4px;top:1429.9px;font-size:25.80px;color:#f3dcab;letter-spacing:0.14px;">Nothing to show yet.</div>
<div class="a" style="left:624.0px;top:1612.5px;width:879.0px;height:147.5px;border-radius:30px;border:2px solid #353538;background:#121214"></div>
<div class="a t" style="left:648.6px;top:1646.9px;font-size:29.00px;color:#f4f4f5;font-weight:bold;-webkit-text-stroke:0;letter-spacing:-0.31px;">Incidents linked to in-progress projects</div>
<div class="a fx" style="left:1430.0px;top:1637.7px;width:47px;height:47px;border-radius:50%;background:#221736;justify-content:center;font-size:25px;color:#a77cec">0</div>
<div class="a" style="left:1536.9px;top:1612.5px;width:878.9px;height:147.5px;border-radius:30px;border:2px solid #353538;background:#121214"></div>
<div class="a t" style="left:1563.1px;top:1646.9px;font-size:29.00px;color:#f4f4f5;font-weight:bold;-webkit-text-stroke:0;letter-spacing:-0.39px;">Top impacted customers/accounts</div>
<div class="a fx" style="left:2342.8px;top:1637.7px;width:47px;height:47px;border-radius:50%;background:#221736;justify-content:center;font-size:25px;color:#a77cec">0</div>
<div class="a" style="left:2448.5px;top:1612.5px;width:878.7px;height:147.5px;border-radius:30px;border:2px solid #353538;background:#121214"></div>
<div class="a t" style="left:2474.7px;top:1646.9px;font-size:29.00px;color:#f4f4f5;font-weight:bold;-webkit-text-stroke:0;letter-spacing:-0.37px;">Top risk-tagged incidents/changes</div>
<div class="a fx" style="left:3254.2px;top:1637.7px;width:47px;height:47px;border-radius:50%;background:#221736;justify-content:center;font-size:25px;color:#a77cec">0</div>
<div class="a" style="left:1674.7px;top:1702.6px;width:78.8px;height:37.4px;border-radius:9px;border:2px solid #9a9a9e;background:#000"></div>
<div class="a" style="left:3298px;top:1576px;width:132px;height:132px;border-radius:50%;background:rgba(12,12,26,0.6)"></div>
<div class="a" style="left:3312.2px;top:1593.8px;width:96px;height:96px;border-radius:50%;background:linear-gradient(90deg,#1f7af5 0%,#5b66e3 40%,#7a5fe0 65%,#9c55d5 100%)"></div>
<svg class="a" style="left:3330px;top:1612px" width="60" height="60" viewBox="0 0 60 60"><g stroke="#fff" stroke-width="3" fill="none" stroke-linecap="round" stroke-linejoin="round"><path d="M30 13.5 C31.5 23 33 26.5 47 29.6 C33 32.5 31.5 36 30 46.5 C28.5 36 27 32.5 13 29.6 C27 26.5 28.5 23 30 13.5 Z"/><path d="M43.4 12 v8.4 M39.2 16.2 h8.4"/><circle cx="16.5" cy="43" r="3.2"/></g></svg>
<div class="a" style="left:3381px;top:1576px;width:46px;height:46px;border-radius:50%;background:rgba(18,50,30,0.75)"></div>
<div class="a" style="left:3390px;top:1584px;width:27.6px;height:27.6px;border-radius:50%;background:#1fc95f"></div>
</body></html>
